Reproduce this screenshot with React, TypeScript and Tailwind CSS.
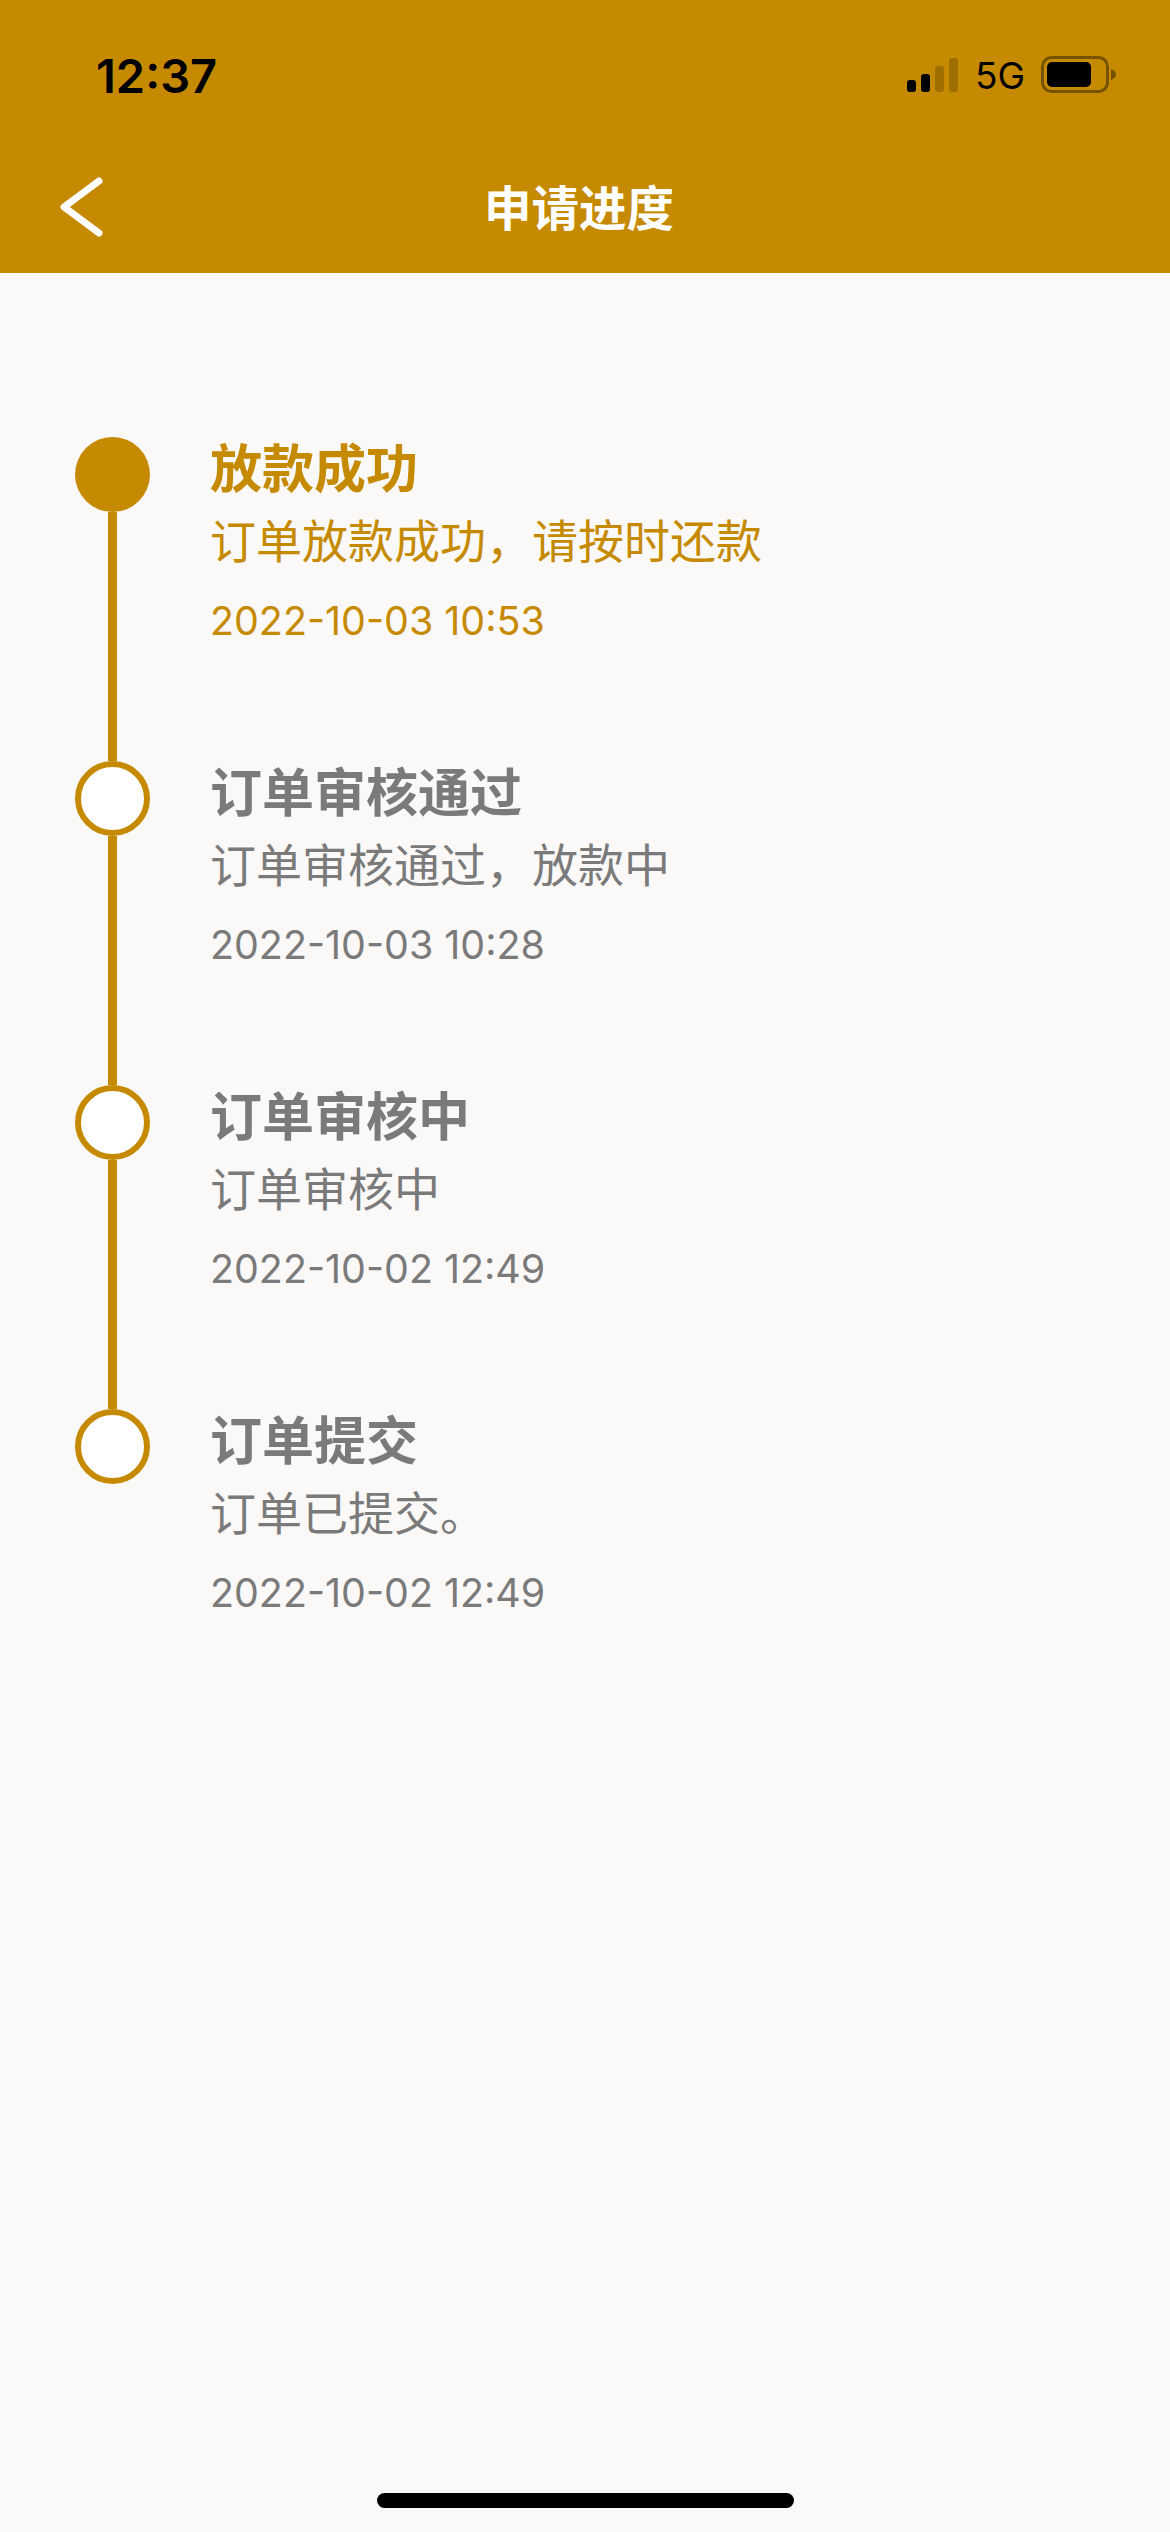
const steps = [
  { title: "放款成功", desc: "订单放款成功，请按时还款", time: "2022-10-03 10:53", active: true },
  { title: "订单审核通过", desc: "订单审核通过，放款中", time: "2022-10-03 10:28", active: false },
  { title: "订单审核中", desc: "订单审核中", time: "2022-10-02 12:49", active: false },
  { title: "订单提交", desc: "订单已提交。", time: "2022-10-02 12:49", active: false },
];

function StatusIcons() {
  return (
    <div className="flex items-center">
      <svg width="52" height="36" viewBox="0 0 52 36" fill="#000">
        <rect x="0" y="23" width="9" height="12" rx="3" />
        <rect x="14" y="17" width="9" height="18" rx="3" />
        <rect x="28" y="9" width="9" height="26" rx="3" opacity="0.2" />
        <rect x="42" y="1" width="9" height="34" rx="3" opacity="0.2" />
      </svg>
      <span className="ml-[16px] text-[37px] leading-none text-black font-['Inter',sans-serif]">5G</span>
      <svg className="ml-[16px]" width="76" height="38" viewBox="0 0 76 38" fill="none">
        <rect x="1.5" y="1.5" width="65" height="34" rx="9" stroke="#000" strokeOpacity="0.4" strokeWidth="3" />
        <rect x="6" y="6" width="44" height="25" rx="5" fill="#000" />
        <path d="M70 13c3 1 5 3 5 5.500s-2 4.500-5 5.500z" fill="#000" fillOpacity="0.4" />
      </svg>
    </div>
  );
}

export default function App() {
  return (
    <div className="flex flex-col h-[2532px] bg-[#faf9f8] font-['Inter','Noto_Sans_CJK_SC',sans-serif]">
      <header className="h-[273px] bg-[#c68a00] flex flex-col">
        <div className="flex items-center justify-between h-[150px] pl-[96px] pr-[53px]">
          <span className="text-[47px] leading-none font-semibold text-black">12:37</span>
          <StatusIcons />
        </div>
        <div className="flex items-center h-[114px] pl-[60px]">
          <svg width="44" height="60" viewBox="0 0 44 60" fill="none">
            <path d="M39 4 L4 30 L39 56" stroke="#fff" strokeWidth="7" strokeLinecap="round" strokeLinejoin="round" />
          </svg>
          <h1 className="ml-[380px] -mt-[3px] text-[47.5px] leading-none font-semibold text-white font-['Noto_Sans_CJK_SC',sans-serif]">申请进度</h1>
        </div>
      </header>

      <main className="pt-[164px] pl-[75px]">
        {steps.map((step, i) => (
          <div key={step.title} className="flex h-[324px]">
            <div className="w-[75px] flex flex-col items-center">
              <div
                className={
                  step.active
                    ? "w-[75px] h-[75px] shrink-0 rounded-full bg-[#c68a00]"
                    : "w-[75px] h-[75px] shrink-0 rounded-full bg-white border-[6px] border-[#c68a00]"
                }
              />
              {i < steps.length - 1 && <div className="w-[9px] flex-1 bg-[#c68a00]" />}
            </div>
            <div className={step.active ? "ml-[60px] -mt-[4px] text-[#c68a00]" : "ml-[60px] -mt-[4px] text-[#7a7a7a]"}>
              <div className="text-[52px] leading-[66px] font-bold font-['Noto_Sans_CJK_SC',sans-serif]">{step.title}</div>
              <div className="mt-[6px] text-[46px] leading-[66px] font-['Noto_Sans_CJK_SC',sans-serif]">{step.desc}</div>
              <div className="mt-[17px] text-[39.4px] leading-[66px]">{step.time}</div>
            </div>
          </div>
        ))}
      </main>

      <div className="mt-auto mb-[24px] self-center w-[417px] h-[15px] rounded-full bg-black" />
    </div>
  );
}
